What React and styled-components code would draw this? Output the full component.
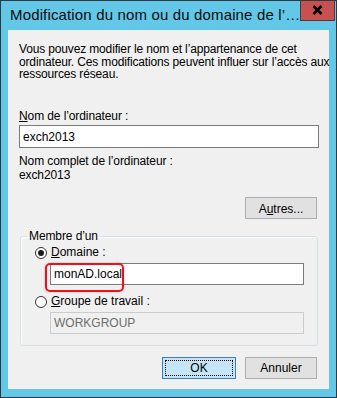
import React from "react";
import styled, { createGlobalStyle } from "styled-components";

const GlobalStyle = createGlobalStyle`
  html, body {
    margin: 0;
    padding: 0;
    background: #ffffff;
  }
  * {
    box-sizing: border-box;
  }
`;

const Frame = styled.div`
  width: 337px;
  height: 398px;
  background: #63c7e8;
  border: 1px solid #2f3a40;
  display: flex;
  flex-direction: column;
  font-family: "Liberation Sans", Arial, sans-serif;
  color: #000;
  overflow: hidden;
`;

const TitleBar = styled.div`
  height: 29px;
  flex: none;
  display: flex;
  align-items: flex-start;
  justify-content: space-between;
`;

const Title = styled.div`
  font-size: 15px;
  line-height: 16px;
  padding: 6px 0 0 9px;
  color: #0b0b0b;
  white-space: nowrap;
  letter-spacing: 0.15px;
`;

const CloseButton = styled.div`
  width: 35px;
  height: 21px;
  margin: -1px 5px 0 0;
  background: #c75050;
  border: 1px solid #5b3434;
  border-top: none;
  display: flex;
  align-items: center;
  justify-content: center;
  flex: none;
`;

const Client = styled.div`
  flex: 1;
  margin: 0 7px 8px 7px;
  background: #f0f0f0;
  padding: 13px 10px 0 11px;
  display: flex;
  flex-direction: column;
  font-size: 12px;
  min-height: 0;
`;

const Intro = styled.p`
  margin: 0;
  line-height: 12.5px;
  white-space: nowrap;
  letter-spacing: -0.15px;
`;

const Label = styled.div`
  line-height: 13px;
  letter-spacing: -0.1px;
  margin-top: ${(p) => p.$top || 0}px;
`;

const Key = styled.span`
  text-decoration: underline;
  text-underline-offset: 1px;
`;

const TextBox = styled.div`
  height: ${(p) => p.$h || 23}px;
  width: ${(p) => (p.$w ? `${p.$w}px` : "auto")};
  margin-top: ${(p) => p.$top || 0}px;
  margin-left: ${(p) => p.$left || 0}px;
  border: 1px solid ${(p) => (p.$disabled ? "#cccccc" : "#7a7a7a")};
  background: ${(p) => (p.$disabled ? "#f0f0f0" : "#ffffff")};
  color: ${(p) => (p.$disabled ? "#6d6d6d" : "#000")};
  display: flex;
  align-items: center;
  padding-left: 3px;
  font-size: 12px;
  flex: none;
`;

const ButtonRow = styled.div`
  display: flex;
  justify-content: flex-end;
  gap: 9px;
  margin-top: ${(p) => p.$top || 0}px;
  padding-right: 2px;
  flex: none;
`;

const Button = styled.div`
  width: ${(p) => p.$w || 72}px;
  height: 22px;
  border: 1px solid ${(p) => (p.$default ? "#3c7fb1" : "#adadad")};
  background: ${(p) => (p.$default ? "#c4e5f6" : "#e1e1e1")};
  display: flex;
  align-items: center;
  justify-content: center;
  font-size: 12px;
  position: relative;
  padding-top: 1px;
`;

const FocusRing = styled.span`
  position: absolute;
  inset: 2px;
  border: 1px dotted #000;
`;

const Group = styled.fieldset`
  margin: 11px 1px 0 1px;
  padding: 3px 5px 11px 5px;
  border: 1px solid #d5dfe5;
  border-radius: 3px;
  box-shadow: inset 1px 1px 0 #ffffff;
  min-width: 0;
  flex: none;
`;

const Legend = styled.legend`
  padding: 0 2px;
  margin-left: 1px;
  font-size: 12px;
  line-height: 13px;
  letter-spacing: -0.1px;
`;

const RadioRow = styled.div`
  display: flex;
  align-items: center;
  gap: 4px;
  margin-left: 9px;
  line-height: 13px;
  margin-top: ${(p) => p.$top || 0}px;
`;

const Radio = styled.span`
  width: 12px;
  height: 12px;
  border-radius: 50%;
  border: 1px solid #333333;
  background: #ffffff;
  display: flex;
  align-items: center;
  justify-content: center;

  &::after {
    content: "";
    width: 6px;
    height: 6px;
    border-radius: 50%;
    background: ${(p) => (p.$checked ? "#1a1a1a" : "transparent")};
  }
`;

const Highlight = styled.div`
  position: relative;
`;

const RedMark = styled.span`
  position: absolute;
  left: 19px;
  top: 0.5px;
  width: 79px;
  height: 29px;
  border: 2px solid #e8141b;
  border-radius: 5px;
  box-shadow: 0 0 2px rgba(232, 20, 27, 0.35);
  pointer-events: none;
`;

export default function App() {
  return (
    <>
      <GlobalStyle />
      <Frame>
        <TitleBar>
          <Title>Modification du nom ou du domaine de l’…</Title>
          <CloseButton>
            <svg width="11" height="10" viewBox="0 0 11 10">
              <path d="M1.5 1 L9.5 9 M9.5 1 L1.5 9" stroke="#000" strokeWidth="2.6" strokeLinecap="butt" />
            </svg>
          </CloseButton>
        </TitleBar>
        <Client>
          <Intro>
            Vous pouvez modifier le nom et l’appartenance de cet
            <br />
            ordinateur. Ces modifications peuvent influer sur l’accès aux
            <br />
            ressources réseau.
          </Intro>

          <Label $top={29.5}>
            <Key>N</Key>om de l’ordinateur :
          </Label>
          <TextBox $top={2}>exch2013</TextBox>

          <Label $top={7}>Nom complet de l’ordinateur :</Label>
          <Label $top={1}>exch2013</Label>

          <ButtonRow $top={15}>
            <Button $w={72}>
              A<Key>u</Key>tres...
            </Button>
          </ButtonRow>

          <Group>
            <Legend>Membre d’un</Legend>
            <RadioRow>
              <Radio $checked />
              <span>
                <Key>D</Key>omaine :
              </span>
            </RadioRow>
            <Highlight>
              <TextBox $h={22} $w={254} $left={24} $top={3.5}>
                monAD.local
              </TextBox>
              <RedMark />
            </Highlight>
            <RadioRow $top={10.5}>
              <Radio />
              <span>
                <Key>G</Key>roupe de travail :
              </span>
            </RadioRow>
            <TextBox $h={22} $w={254} $left={24} $top={3.5} $disabled>
              WORKGROUP
            </TextBox>
          </Group>

          <ButtonRow $top={11}>
            <Button $default $w={74}>
              OK
              <FocusRing />
            </Button>
            <Button $w={72}>Annuler</Button>
          </ButtonRow>
        </Client>
      </Frame>
    </>
  );
}
